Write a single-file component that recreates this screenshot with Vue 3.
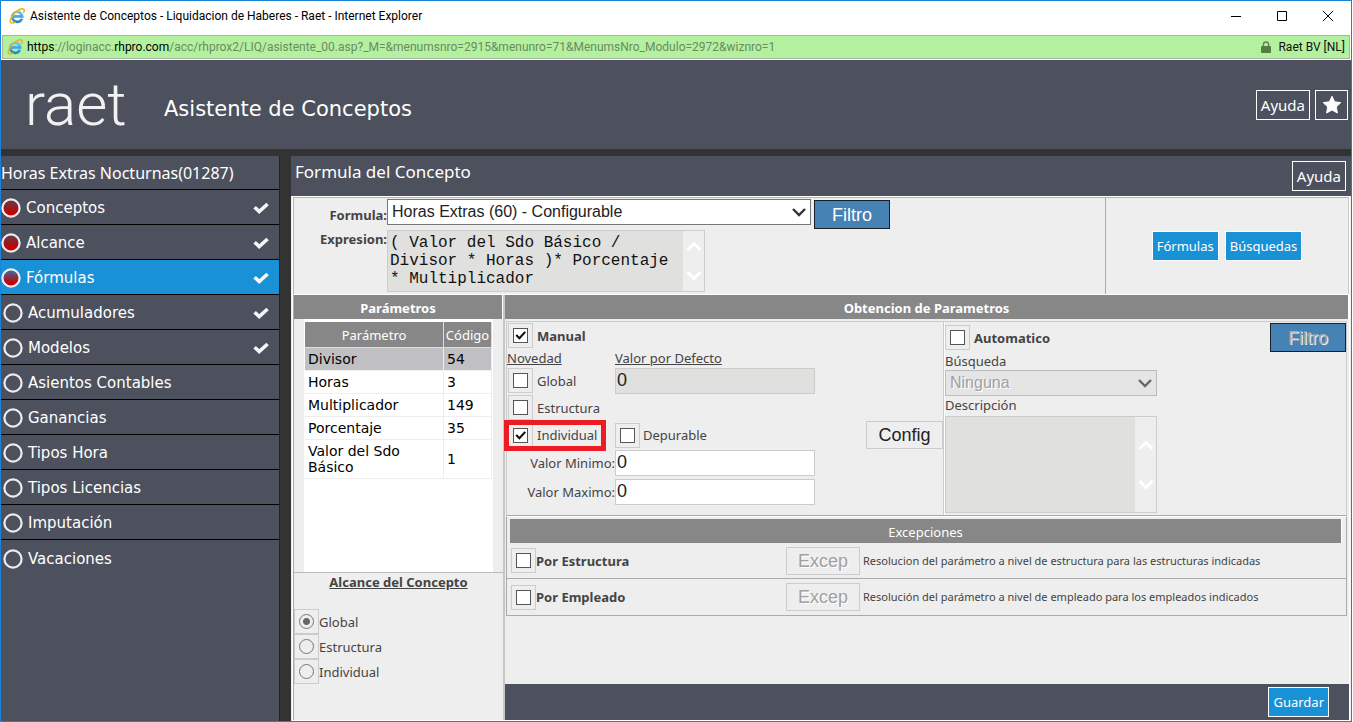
<script setup>
import { ref } from 'vue'

const steps = [
  { name: 'Conceptos', visited: true, done: true },
  { name: 'Alcance', visited: true, done: true },
  { name: 'Fórmulas', visited: true, done: true, active: true },
  { name: 'Acumuladores', done: true },
  { name: 'Modelos', done: true },
  { name: 'Asientos Contables' },
  { name: 'Ganancias' },
  { name: 'Tipos Hora' },
  { name: 'Tipos Licencias' },
  { name: 'Imputación' },
  { name: 'Vacaciones' }
]

const parameters = [
  { name: 'Divisor', code: 54 },
  { name: 'Horas', code: 3 },
  { name: 'Multiplicador', code: 149 },
  { name: 'Porcentaje', code: 35 },
  { name: 'Valor del Sdo Básico', code: 1 }
]

const exceptions = [
  { id: 'ex-est', name: 'Por Estructura', text: 'Resolucion del parámetro a nivel de estructura para las estructuras indicadas' },
  { id: 'ex-emp', name: 'Por Empleado', text: 'Resolución del parámetro a nivel de empleado para los empleados indicados' }
]

const expression = ref('( Valor del Sdo Básico /\nDivisor * Horas )* Porcentaje\n* Multiplicador')
const scope = ref('Global')
const manual = ref(true)
const individual = ref(true)
const defaultValue = ref('0')
const minimum = ref('0')
const maximum = ref('0')
</script>

<template>
  <div class="window">
    <svg class="defs" aria-hidden="true">
      <defs>
        <linearGradient id="ieBlue" x1="0" y1="0" x2="0" y2="1">
          <stop offset="0" stop-color="#6cc8f2" />
          <stop offset="1" stop-color="#1f86cf" />
        </linearGradient>
        <linearGradient id="redDot" x1="0" y1="0" x2="0" y2="1">
          <stop offset="0.1" stop-color="#b00000" stop-opacity="0.3" />
          <stop offset="0.8" stop-color="#cc0000" />
        </linearGradient>
        <symbol id="ie" viewBox="0 0 16 16">
          <path d="M12.9 10.6A5 5 0 1 1 13.2 8.4H4.6" fill="none" stroke="url(#ieBlue)" stroke-width="2.7" />
          <path d="M2.2 14.9C-.6 13.6 2.9 7 7.6 3.4 11.4.5 15.4-.2 15.2 2.6c0 .8-.4 1.8-.8 2.6" fill="none" stroke="#f0b51c" stroke-width="1.6" />
          <path d="M2.2 14.9c1.1.4 2.8-.2 4.2-1.1" fill="none" stroke="#f0b51c" stroke-width="1.4" />
        </symbol>
        <symbol id="tick" viewBox="0 0 14 14">
          <path d="M3 6.6 6 9.6 11.4 3.6" fill="none" stroke="#111" stroke-width="2" />
        </symbol>
      </defs>
    </svg>

    <div class="titlebar">
      <svg class="ie"><use href="#ie" /></svg>
      <span class="caption">Asistente de Conceptos - Liquidacion de Haberes - Raet - Internet Explorer</span>
      <button class="win" aria-label="Minimizar"><svg viewBox="0 0 12 12"><path d="M1 6.5h10" /></svg></button>
      <button class="win" aria-label="Maximizar"><svg viewBox="0 0 12 12"><path d="M1.5 1.5h9v9h-9z" /></svg></button>
      <button class="win" aria-label="Cerrar"><svg viewBox="0 0 12 12"><path d="M1 1l10 10M11 1 1 11" /></svg></button>
    </div>

    <div class="address">
      <svg class="ie"><use href="#ie" /></svg>
      <span class="url"><b>https</b>://loginacc.<b>rhpro.com</b>/acc/rhprox2/LIQ/asistente_00.asp?_M=&amp;menumsnro=2915&amp;menunro=71&amp;MenumsNro_Modulo=2972&amp;wiznro=1</span>
      <svg class="lock" viewBox="0 0 10 12"><path d="M2.4 6V3.6a2.6 2.6 0 0 1 5.2 0V6" fill="none" stroke="#5e8552" stroke-width="1.4" /><rect y="5" width="10" height="7" rx="1" fill="#557d49" /></svg>
      <span class="owner">Raet BV [NL]</span>
    </div>

    <header class="banner">
      <span class="logo">raet</span>
      <h1>Asistente de Conceptos</h1>
      <button class="outline">Ayuda</button>
      <button class="outline star" aria-label="Favorito">
        <svg viewBox="0 0 20 20"><path d="M10 1.2 12.6 6.8 18.8 7.6 14.3 11.9 15.4 18 10 15 4.6 18 5.7 11.9 1.2 7.6 7.4 6.8Z" fill="#fff" stroke="#fff" stroke-linejoin="round" /></svg>
      </button>
    </header>

    <div class="body">
      <nav class="side">
        <h2>Horas Extras Nocturnas(01287)</h2>
        <a v-for="s in steps" :key="s.name" href="#" :class="{ active: s.active, visited: s.visited }">
          <svg class="dot" viewBox="0 0 20 20"><circle cx="10" cy="10" r="8.6" :fill="s.visited ? 'url(#redDot)' : 'none'" stroke="#ededf0" stroke-width="2.2" /></svg>
          <span>{{ s.name }}</span>
          <svg v-if="s.done" class="check" viewBox="0 0 16 13"><path d="M1.6 5.2 6.2 9.6 14.6 2" fill="none" stroke="#f4f6fa" stroke-width="3.6" /></svg>
        </a>
      </nav>

      <main class="main">
        <div class="heading">
          <h2>Formula del Concepto</h2>
          <button class="outline">Ayuda</button>
        </div>

        <div class="content">
          <section class="formula">
            <div class="formula-fields">
              <label class="strong" for="formula">Formula:</label>
              <div class="pick">
                <span class="select">
                  <select id="formula"><option>Horas Extras (60) - Configurable</option></select>
                  <svg viewBox="0 0 16 10"><path d="M2 2l6 6 6-6" /></svg>
                </span>
                <button class="filter">Filtro</button>
              </div>
              <label class="strong" for="expression">Expresion:</label>
              <div class="area">
                <textarea id="expression" v-model="expression" readonly></textarea>
                <span class="scroll">
                  <svg viewBox="0 0 16 12"><path d="M1.5 10 8 3.5 14.5 10" /></svg>
                  <svg viewBox="0 0 16 12"><path d="M1.5 2 8 8.5 14.5 2" /></svg>
                </span>
              </div>
            </div>
            <div class="links">
              <button class="blue">Fórmulas</button>
              <button class="blue">Búsquedas</button>
            </div>
          </section>

          <div class="columns">
            <aside class="left">
              <h3 class="bar">Parámetros</h3>
              <div class="sheet">
                <table>
                  <thead><tr><th>Parámetro</th><th>Código</th></tr></thead>
                  <tbody>
                    <tr v-for="(p, i) in parameters" :key="p.code" :class="{ selected: i === 0 }"><td>{{ p.name }}</td><td>{{ p.code }}</td></tr>
                  </tbody>
                </table>
              </div>
              <div class="scope">
                <h4>Alcance del Concepto</h4>
                <label v-for="o in ['Global', 'Estructura', 'Individual']" :key="o">
                  <span class="box"><input v-model="scope" type="radio" name="scope" :value="o" /></span>{{ o }}
                </label>
              </div>
            </aside>

            <section class="right">
              <h3 class="bar">Obtencion de Parametros</h3>
              <div class="panels">
                <div class="manual">
                  <label class="opt strong"><span class="box"><input v-model="manual" type="checkbox" /><svg v-if="manual"><use href="#tick" /></svg></span>Manual</label>
                  <div class="row caps"><span><u>Novedad</u></span><label for="default"><u>Valor por Defecto</u></label></div>
                  <div class="row">
                    <label class="opt"><span class="box"><input type="checkbox" /></span>Global</label>
                    <input id="default" v-model="defaultValue" class="text off" readonly />
                  </div>
                  <div class="row"><label class="opt"><span class="box"><input type="checkbox" /></span>Estructura</label></div>
                  <div class="row">
                    <label class="opt marked"><span class="box"><input v-model="individual" type="checkbox" /><svg v-if="individual"><use href="#tick" /></svg></span>Individual</label>
                    <label class="opt purge"><span class="box"><input type="checkbox" /></span>Depurable</label>
                    <button class="grey">Config</button>
                  </div>
                  <div class="row limit"><label class="end" for="min">Valor Minimo:</label><input id="min" v-model="minimum" class="text" /></div>
                  <div class="row limit"><label class="end" for="max">Valor Maximo:</label><input id="max" v-model="maximum" class="text" /></div>
                </div>

                <div class="auto">
                  <div class="auto-top">
                    <label class="opt strong"><span class="box"><input type="checkbox" /></span>Automatico</label>
                    <button class="filter" disabled>Filtro</button>
                  </div>
                  <label class="line" for="search">Búsqueda</label>
                  <span class="select dim">
                    <select id="search" disabled><option>Ninguna</option></select>
                    <svg viewBox="0 0 16 10"><path d="M2 2l6 6 6-6" /></svg>
                  </span>
                  <label class="line desc" for="description">Descripción</label>
                  <div class="area tall">
                    <textarea id="description" readonly></textarea>
                    <span class="scroll">
                      <svg viewBox="0 0 16 12"><path d="M1.5 10 8 3.5 14.5 10" /></svg>
                      <svg viewBox="0 0 16 12"><path d="M1.5 2 8 8.5 14.5 2" /></svg>
                    </span>
                  </div>
                </div>
              </div>

              <div class="exceptions">
                <h3 class="bar thin">Excepciones</h3>
                <div v-for="e in exceptions" :key="e.id" class="exc">
                  <label class="strong"><span class="box"><input type="checkbox" /></span>{{ e.name }}</label>
                  <button class="grey" disabled>Excep</button>
                  <span>{{ e.text }}</span>
                </div>
              </div>

              <footer><button class="blue save">Guardar</button></footer>
            </section>
          </div>
        </div>
      </main>
    </div>
  </div>
</template>

<style>
body { background: #fff; }
</style>

<style scoped>
* { box-sizing: border-box; }
h1, h2, h3, h4 { margin: 0; font-weight: 400; }
button, select, input, textarea { font: inherit; margin: 0; border-radius: 0; outline: none; }
button { padding: 0; }
.window {
  display: flex; flex-direction: column; min-height: 100vh; margin-right: 1px;
  border: 1px solid #1883d7; background: #fff; color: #444;
  font: 13px/16px "Noto Sans", "Open Sans", sans-serif;
}
.defs { position: absolute; width: 0; height: 0; }
.ie { width: 16px; height: 16px; flex: none; }
.titlebar { display: flex; align-items: center; height: 34px; padding: 0 0 4px 8px; color: #000; font: 12px/16px Roboto, sans-serif; }
.caption { flex: 1; margin-left: 5px; }
.win { display: flex; align-items: center; justify-content: center; width: 46px; height: 28px; border: 0; background: none; }
.win svg { width: 12px; height: 12px; fill: none; stroke: #000; }
.address {
  display: flex; align-items: center; height: 24px; margin: 0 1px 1px; padding: 0 4px;
  border: 1px solid #a9b5a5; background: #b4f19f; color: #6b8a62; font: 12px/16px Roboto, sans-serif;
}
.url { flex: 1; margin-left: 4px; }
.url b { color: #000; font-weight: 400; }
.lock { width: 10px; height: 12px; margin-right: 7px; }
.owner { color: #111; }

.banner { display: flex; align-items: center; height: 89px; padding: 0 3px 0 24px; background: #4d515d; color: #fff; }
.logo { width: 139px; font: 300 60px/64px Roboto, "Open Sans", sans-serif; color: #f1f1f3; }
h1 { flex: 1; padding-top: 8px; font: 21px/28px "DejaVu Sans", sans-serif; }
.outline { height: 30px; padding: 0 4px; border: 1px solid #fff; background: transparent; color: #fff; font-size: 15px; }
.star { display: flex; align-items: center; justify-content: center; width: 33px; margin-left: 5px; }
.star svg { width: 20px; height: 20px; }

.body { flex: 1; display: flex; border-top: 7px solid #333; background: #333; }
.side { width: 279px; flex: none; background: #4d515d; color: #fff; font: 15px/20px "DejaVu Sans", sans-serif; border-right: 1px solid #222; }
.side h2 { height: 34px; font: 16px/35px "Noto Sans", sans-serif; border-bottom: 1px solid #000; }
.side a { display: flex; align-items: center; height: 35px; padding: 2px 10px 0 2px; border-bottom: 1px solid #000; color: #fff; text-decoration: none; }
.side a:last-child { border-bottom: 0; }
.side a.visited { padding-left: 0; }
.side a.active { background: #1991d6; }
.side a span { flex: 1; margin-left: 5px; }
.dot { width: 20px; height: 20px; }
.check { width: 16px; height: 13px; }

.main { flex: 1; min-width: 0; display: flex; flex-direction: column; margin-left: 11px; background: #eee; }
.heading { display: flex; justify-content: space-between; height: 40px; padding: 5px 5px 0 4px; background: #4d515d; color: #fff; }
h2 { font-size: 17px; line-height: 22px; }
.content { flex: 1; display: flex; flex-direction: column; margin: 0 1px; border: 1px solid #fff; }
.formula { display: flex; border: 1px solid #b4b4b4; border-right-color: #ccc; border-bottom-color: #fff; }
.formula-fields { flex: 1; display: grid; grid-template-columns: 93px 1fr; grid-template-rows: 32px 62px; }
.formula-fields > label { justify-self: end; padding-top: 9px; }
.formula-fields > label:nth-of-type(2) { padding-top: 1px; }
.strong { font-weight: 700; }
.pick { display: flex; padding-top: 1px; }
.select { position: relative; display: block; width: 424px; height: 26px; }
.select select { appearance: none; width: 100%; height: 100%; padding: 0 4px; border: 1px solid #777; background: #fff; color: #222; font: 16px/22px "Liberation Sans", Arial, sans-serif; }
.select svg { position: absolute; right: 4px; top: 8px; width: 16px; height: 10px; fill: none; stroke: #333; stroke-width: 2.4; pointer-events: none; }
.select.dim { width: 212px; }
.dim select { border-color: #bbb; background: #e5e5e5; color: #a0a0a0; opacity: 1; text-shadow: 1px 1px #fff; }
.dim svg { stroke: #666; }
.filter { height: 29px; width: 76px; margin: 1px 0 0 3px; border: 1px solid #16202a; background: #4682b4; color: #fff; font: 18px/26px "Liberation Sans", Arial, sans-serif; }
.filter:disabled { color: #aaa; text-shadow: 1px 1px #eee; }
.area { display: flex; width: 318px; height: 62px; border: 1px solid #ccc; background: #e0e0de; }
.area textarea { flex: 1; min-width: 0; padding: 3px 2px 0; border: 0; background: transparent; resize: none; overflow: hidden; color: #111; font: 16px/18px "Liberation Mono", "Courier New", monospace; }
.scroll { display: flex; flex-direction: column; align-items: center; justify-content: center; gap: 18px; width: 21px; background: #eee; }
.scroll svg { width: 16px; height: 12px; fill: none; stroke: #fff; stroke-width: 3; }
.tall { width: 212px; height: 97px; }
.tall .scroll { gap: 28px; }
.links { display: flex; align-items: center; justify-content: center; gap: 6px; width: 243px; height: 96px; border-left: 1px solid #aaa; }
.blue { height: 30px; padding: 0 4px; border: 1px solid #fff; background: #1991d6; color: #fff; }

.columns { flex: 1; display: flex; }
.left { width: 212px; display: flex; flex-direction: column; border-left: 1px solid #aaa; border-right: 2px solid #c6c6c6; }
.bar { height: 24px; border-right: 1px solid #fff; background: #878787; color: #fff; font-size: 13px; line-height: 26px; font-weight: 700; text-align: center; }
.sheet { width: 189px; height: 253px; margin-left: 10px; padding: 3px 0 0 1px; background: #fff; }
.sheet table { width: 187px; border-spacing: 0; color: #000; font: 14px/16px "DejaVu Sans", sans-serif; }
th { height: 26px; padding: 0; border-right: 1px solid #ddd; border-bottom: 1px solid #ddd; background: #878787; color: #fff; font: 13px/16px "Noto Sans", sans-serif; }
th:last-child, td:last-child { width: 48px; }
td { height: 23px; padding: 3px 3px; border-right: 1px solid #eee; border-bottom: 1px solid #eee; }
.selected td { background: #c0c0c2; }
.scope { flex: 1; border-top: 1px solid #bbb; }
.scope h4 { margin: 1px 0 19px; font-size: 13px; line-height: 16px; font-weight: 700; text-align: center; text-decoration: underline; }
.scope label { display: flex; align-items: center; height: 25px; margin-left: 0; }
.box { position: relative; flex: none; display: inline-flex; align-items: center; justify-content: center; width: 25px; height: 25px; border: 1px solid #ccc; }
.box input { appearance: none; width: 15px; height: 15px; border: 1px solid #555; background: #fff; }
.box svg { position: absolute; width: 15px; height: 15px; pointer-events: none; }
.box input[type="radio"] { border-color: #777; border-radius: 50%; background: #eee; }
.box input[type="radio"]:checked { background: radial-gradient(circle, #666 0 3px, #eee 4px); }

.right { flex: 1; min-width: 0; display: flex; flex-direction: column; }
.panels { display: flex; height: 195px; margin: 2px 2px 0 1px; border: 1px solid #ccc; border-bottom-color: #aaa; }
.manual { width: 437px; padding-top: 1px; border-right: 1px solid #ccc; }
.manual .opt { padding-left: 1px; }
.opt { display: flex; align-items: center; gap: 4px; }
.manual .purge { gap: 3px; padding-left: 0; }
.row { display: grid; grid-template-columns: 108px 200px 1fr; align-items: center; height: 27px; }
.caps { height: 19px; }
.limit { height: 29px; }
.end { justify-self: end; }
.text { width: 200px; height: 26px; padding: 0 1px; border: 1px solid #ccc; background: #fff; color: #222; font: 18px/22px "Liberation Sans", Arial, sans-serif; }
.off { background: #e0e0de; }
.marked { position: relative; }
.marked::after { content: ""; position: absolute; left: -3px; top: -3px; right: 9px; bottom: -3px; border: 5px solid #ed1c24; }
.grey { justify-self: end; width: 77px; height: 28px; border: 1px solid #ccc; background: #eee; color: #222; font: 18px/24px "Liberation Sans", Arial, sans-serif; }
.grey:disabled { color: #a0a0a0; text-shadow: 1px 1px #fff; }
.auto { flex: 1; padding: 0; border-left: 1px solid #fff; }
.auto-top { display: flex; justify-content: space-between; height: 31px; }
.line { display: block; height: 17px; }
.desc { height: 20px; line-height: 18px; }
.exceptions { margin: 0 2px 0 1px; padding-top: 2px; border: 1px solid #aaa; border-top-color: #fff; }
.thin { margin: 0 4px 0 3px; font-weight: 400; }
.exc { display: flex; align-items: center; height: 36px; padding-left: 4px; border-bottom: 1px solid #aaa; font-size: 11px; }
.exc:last-child { border-bottom: 0; }
.exc label { display: flex; align-items: center; width: 275px; font-size: 13px; }
.exc .grey { width: 74px; margin-right: 3px; }
footer { display: flex; align-items: center; justify-content: flex-end; height: 36px; margin-top: auto; padding-right: 20px; background: #4d515d; }
</style>
